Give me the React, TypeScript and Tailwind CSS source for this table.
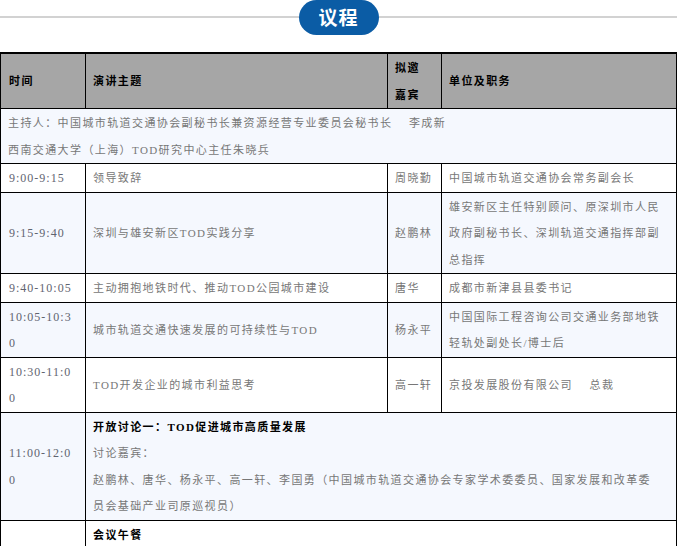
import React from 'react';

type Row = {
  time: string;
  topic: string;
  guest: string;
  org: string[];
};

const rows: Row[] = [
  { time: '9:00-9:15', topic: '领导致辞', guest: '周晓勤', org: ['中国城市轨道交通协会常务副会长'] },
  {
    time: '9:15-9:40',
    topic: '深圳与雄安新区TOD实践分享',
    guest: '赵鹏林',
    org: ['雄安新区主任特别顾问、原深圳市人民', '政府副秘书长、深圳轨道交通指挥部副', '总指挥'],
  },
  { time: '9:40-10:05', topic: '主动拥抱地铁时代、推动TOD公园城市建设', guest: '唐华', org: ['成都市新津县县委书记'] },
  {
    time: '10:05-10:30',
    topic: '城市轨道交通快速发展的可持续性与TOD',
    guest: '杨永平',
    org: ['中国国际工程咨询公司交通业务部地铁', '轻轨处副处长/博士后'],
  },
  { time: '10:30-11:00', topic: 'TOD开发企业的城市利益思考', guest: '高一轩', org: ['京投发展股份有限公司\u3000 总裁'] },
];

const cell = 'border border-black px-[7px] pt-px pb-0 align-middle';
const timeCell =
  'border border-black pl-[8px] pr-[8px] pt-px pb-0 align-middle break-all text-[12px] tracking-[1px] text-[#5f6470]';

export default function App() {
  return (
    <div
      className="w-[677px] h-[546px] overflow-hidden bg-white"
      style={{ fontFamily: '"Liberation Serif", "Noto Sans CJK SC", serif' }}
    >
      {/* 标题 */}
      <div className="flex items-start h-[52px]">
        <div className="flex-1 h-[2px] mt-[16px] bg-[#d2d2d2]" />
        <div
          className="w-[80px] h-[35px] rounded-full bg-[#0b5ca5] flex items-center justify-center text-white text-[19px] font-bold tracking-[1px]"
          style={{ fontFamily: '"Noto Sans CJK SC", sans-serif' }}
        >
          议程
        </div>
        <div className="flex-1 h-[2px] mt-[16px] bg-[#d2d2d2]" />
      </div>

      <table className="w-[676px] table-fixed border-collapse text-[11px] leading-[26.5px] text-[#777] tracking-[1.4px]">
        <colgroup>
          <col className="w-[85px]" />
          <col className="w-[302px]" />
          <col className="w-[54px]" />
          <col className="w-[235px]" />
        </colgroup>
        <thead>
          <tr className="bg-[#a6a6a6] text-black font-bold">
            <td className="border border-black border-t-2 pl-[8px] pt-px align-middle">时间</td>
            <td className={cell + ' border-t-2'}>演讲主题</td>
            <td className={cell + ' border-t-2'}>
              拟邀
              <br />
              嘉宾
            </td>
            <td className={cell + ' border-t-2'}>单位及职务</td>
          </tr>
        </thead>
        <tbody>
          <tr className="bg-[#f5f8fe]">
            <td colSpan={4} className={cell}>
              <div className="whitespace-nowrap">
                主持人：中国城市轨道交通协会副秘书长兼资源经营专业委员会秘书长{'\u3000 '}李成新
              </div>
              <div className="whitespace-nowrap">西南交通大学（上海）TOD研究中心主任朱晓兵</div>
            </td>
          </tr>
          {rows.map((r, i) => (
            <tr key={r.time} className={i % 2 === 1 ? 'bg-[#f5f8fe]' : 'bg-white'}>
              <td className={timeCell}>{r.time}</td>
              <td className={cell}>{r.topic}</td>
              <td className={cell + ' whitespace-nowrap'}>{r.guest}</td>
              <td className={cell}>
                {r.org.map((line) => (
                  <div key={line} className="whitespace-nowrap">
                    {line}
                  </div>
                ))}
              </td>
            </tr>
          ))}
          <tr className="bg-[#f5f8fe]">
            <td className={timeCell}>11:00-12:00</td>
            <td colSpan={3} className={cell}>
              <div className="font-bold text-black">开放讨论一：TOD促进城市高质量发展</div>
              <div>讨论嘉宾：</div>
              <div className="whitespace-nowrap">
                赵鹏林、唐华、杨永平、高一轩、李国勇（中国城市轨道交通协会专家学术委委员、国家发展和改革委
              </div>
              <div>员会基础产业司原巡视员）</div>
            </td>
          </tr>
          <tr className="bg-white">
            <td className={timeCell}></td>
            <td colSpan={3} className={cell}>
              <div className="font-bold text-black">会议午餐</div>
            </td>
          </tr>
        </tbody>
      </table>
    </div>
  );
}
